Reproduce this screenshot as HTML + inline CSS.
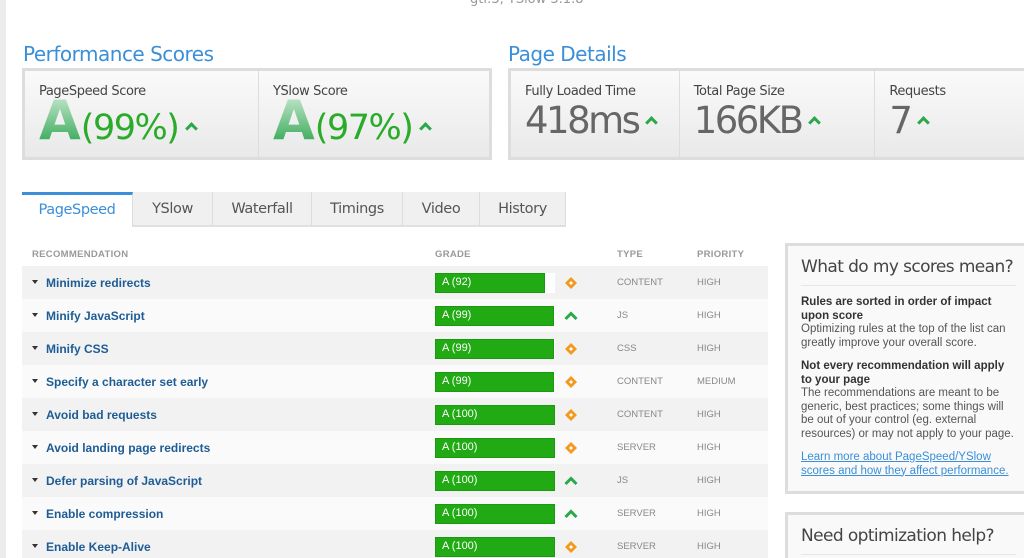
<!DOCTYPE html>
<html style="width:1024px;height:558px;overflow:hidden"><head><meta charset="utf-8"><style>
*{margin:0;padding:0;box-sizing:border-box}
body{width:1024px;height:558px;overflow:hidden;background:#fff;font-family:"DejaVu Sans","Liberation Sans",sans-serif;position:relative}
.abs{position:absolute}
.lstrip{left:0;top:0;width:6px;height:558px;background:#ececec}
h2{position:absolute;font-weight:normal;color:#3b8fd9;font-size:20px;letter-spacing:-0.5px}
.box{position:absolute;border:3px solid #ddd;background:linear-gradient(#fafafa,#e9e9e9);display:flex}
.cell{border-right:1px solid #ddd;padding:13px 0 0 14px;height:100%}
.lbl{font-size:13px;color:#444;letter-spacing:-0.4px}
.big{font-size:37px;color:#666;letter-spacing:-2.5px;line-height:40px;margin-top:2px}
.car{display:inline-block;width:9px;height:9px;border-left:3px solid #2aa84a;border-top:3px solid #2aa84a;transform:rotate(45deg);margin-left:9px;vertical-align:6px}
.A{font-size:54px;font-weight:bold;font-family:"DejaVu Sans",sans-serif;line-height:44px;background:linear-gradient(#d4eed9,#1f9f45);-webkit-background-clip:text;color:transparent}
.pct{font-size:35px;color:#2aab2a;letter-spacing:-1.5px}
.tabs{position:absolute;top:192px;left:22px;height:35px;display:flex}
.tab{background:#f0f0f0;border-right:1px solid #ddd;border-bottom:2px solid #e0e0e0;font-size:14.5px;color:#555;text-align:center;line-height:34px;letter-spacing:-0.4px}
.tab.act{background:#fff;color:#3b8fd9;border-top:3px solid #3b8fd9;border-bottom:none;line-height:30px}
.th{position:absolute;top:249px;font:bold 9.5px "Liberation Sans",sans-serif;color:#999;letter-spacing:.3px}
.row{position:absolute;left:22px;width:746px;height:33px;font-family:"Liberation Sans",sans-serif}
.row .n{position:absolute;left:24px;top:10px;font-size:12px;font-weight:bold;color:#1e5c96}
.row .n:before{content:"";position:absolute;left:-14px;top:4px;border:3.5px solid transparent;border-top:4px solid #333}
.bar{position:absolute;left:413px;top:7px;width:120px;height:20px;background:#fff}
.bar i{position:absolute;left:0;top:0;bottom:0;background:#22aa14;border:1px solid #1a9a10}
.bar span{position:absolute;left:7px;top:3px;color:#fff;font-size:11px}
.ic{position:absolute;left:542px;top:10px}
.ty,.pr{position:absolute;top:11px;font-size:9.5px;color:#888}
.ty{left:595px}.pr{left:675px}
.side{position:absolute;left:785px;width:250px;border:3px solid #ddd;background:#f9f9f9;font-family:"Liberation Sans",sans-serif;overflow:hidden}
.side h3{font:normal 17px "DejaVu Sans",sans-serif;color:#444;letter-spacing:-0.6px;white-space:nowrap;margin:0 16px 0 13px;padding:11px 0 8px;border-bottom:1px solid #e6e6e6}
.side p{font-size:11.5px;color:#555;margin:0 18px 0 13px;line-height:13.5px}
.side b{color:#333}
.side a{color:#3b8fd9;text-decoration:underline}
</style></head><body>
<div class="abs lstrip"></div>
<div class="abs" style="left:470px;top:-8px;font-size:13px;color:#999">gtl:3, YSlow 3.1.8</div>
<h2 style="left:23px;top:42px">Performance Scores</h2>
<h2 style="left:508px;top:42px">Page Details</h2>
<div class="box" style="left:22px;top:68px;width:470px;height:92px">
 <div class="cell" style="width:234px"><div class="lbl">PageSpeed Score</div><div style="white-space:nowrap"><span class="A">A</span><span class="pct">(99%)</span><span class="car"></span></div></div>
 <div class="cell" style="width:230px;border:none"><div class="lbl">YSlow Score</div><div style="white-space:nowrap"><span class="A">A</span><span class="pct">(97%)</span><span class="car"></span></div></div>
</div>
<div class="box" style="left:508px;top:68px;width:530px;height:92px">
 <div class="cell" style="width:169px"><div class="lbl">Fully Loaded Time</div><div class="big">418ms<span class="car"></span></div></div>
 <div class="cell" style="width:196px"><div class="lbl">Total Page Size</div><div class="big">166KB<span class="car"></span></div></div>
 <div class="cell" style="width:160px;border:none"><div class="lbl">Requests</div><div class="big">7<span class="car"></span></div></div>
</div>
<div class="tabs">
 <div class="tab act" style="width:111px">PageSpeed</div>
 <div class="tab" style="width:80px">YSlow</div>
 <div class="tab" style="width:99px">Waterfall</div>
 <div class="tab" style="width:91px">Timings</div>
 <div class="tab" style="width:77px">Video</div>
 <div class="tab" style="width:86px">History</div>
</div>
<div class="th" style="left:32px">RECOMMENDATION</div>
<div class="th" style="left:435px">GRADE</div>
<div class="th" style="left:617px">TYPE</div>
<div class="th" style="left:697px">PRIORITY</div>

<div class="row" style="top:266px;background:#f2f2f2"><span class="n">Minimize redirects</span><div class="bar"><i style="width:110px"></i><span>A (92)</span></div><svg class="ic" width="14" height="14"><path d="M7 1L13 7 7 13 1 7Z" fill="#f39a1e"/><path d="M7 5L9 7 7 9 5 7Z" fill="#fff"/></svg><span class="ty">CONTENT</span><span class="pr">HIGH</span></div>
<div class="row" style="top:299px;background:#fafafa"><span class="n">Minify JavaScript</span><div class="bar"><i style="width:119px"></i><span>A (99)</span></div><svg class="ic" width="14" height="14"><path d="M1.5 10L7 4.5 12.5 10" fill="none" stroke="#2aa84a" stroke-width="3"/></svg><span class="ty">JS</span><span class="pr">HIGH</span></div>
<div class="row" style="top:332px;background:#f2f2f2"><span class="n">Minify CSS</span><div class="bar"><i style="width:119px"></i><span>A (99)</span></div><svg class="ic" width="14" height="14"><path d="M7 1L13 7 7 13 1 7Z" fill="#f39a1e"/><path d="M7 5L9 7 7 9 5 7Z" fill="#fff"/></svg><span class="ty">CSS</span><span class="pr">HIGH</span></div>
<div class="row" style="top:365px;background:#fafafa"><span class="n">Specify a character set early</span><div class="bar"><i style="width:119px"></i><span>A (99)</span></div><svg class="ic" width="14" height="14"><path d="M7 1L13 7 7 13 1 7Z" fill="#f39a1e"/><path d="M7 5L9 7 7 9 5 7Z" fill="#fff"/></svg><span class="ty">CONTENT</span><span class="pr">MEDIUM</span></div>
<div class="row" style="top:398px;background:#f2f2f2"><span class="n">Avoid bad requests</span><div class="bar"><i style="width:120px"></i><span>A (100)</span></div><svg class="ic" width="14" height="14"><path d="M7 1L13 7 7 13 1 7Z" fill="#f39a1e"/><path d="M7 5L9 7 7 9 5 7Z" fill="#fff"/></svg><span class="ty">CONTENT</span><span class="pr">HIGH</span></div>
<div class="row" style="top:431px;background:#fafafa"><span class="n">Avoid landing page redirects</span><div class="bar"><i style="width:120px"></i><span>A (100)</span></div><svg class="ic" width="14" height="14"><path d="M7 1L13 7 7 13 1 7Z" fill="#f39a1e"/><path d="M7 5L9 7 7 9 5 7Z" fill="#fff"/></svg><span class="ty">SERVER</span><span class="pr">HIGH</span></div>
<div class="row" style="top:464px;background:#f2f2f2"><span class="n">Defer parsing of JavaScript</span><div class="bar"><i style="width:120px"></i><span>A (100)</span></div><svg class="ic" width="14" height="14"><path d="M1.5 10L7 4.5 12.5 10" fill="none" stroke="#2aa84a" stroke-width="3"/></svg><span class="ty">JS</span><span class="pr">HIGH</span></div>
<div class="row" style="top:497px;background:#fafafa"><span class="n">Enable compression</span><div class="bar"><i style="width:120px"></i><span>A (100)</span></div><svg class="ic" width="14" height="14"><path d="M1.5 10L7 4.5 12.5 10" fill="none" stroke="#2aa84a" stroke-width="3"/></svg><span class="ty">SERVER</span><span class="pr">HIGH</span></div>
<div class="row" style="top:530px;background:#f2f2f2"><span class="n">Enable Keep-Alive</span><div class="bar"><i style="width:120px"></i><span>A (100)</span></div><svg class="ic" width="14" height="14"><path d="M7 1L13 7 7 13 1 7Z" fill="#f39a1e"/><path d="M7 5L9 7 7 9 5 7Z" fill="#fff"/></svg><span class="ty">SERVER</span><span class="pr">HIGH</span></div>

<div class="side" style="top:243px;height:251px">
 <h3>What do my scores mean?</h3>
 <p style="margin-top:10px"><b>Rules are sorted in order of impact upon score</b><br>Optimizing rules at the top of the list can greatly improve your overall score.</p>
 <p style="margin-top:10px"><b>Not every recommendation will apply to your page</b><br>The recommendations are meant to be generic, best practices; some things will be out of your control (eg. external resources) or may not apply to your page.</p>
 <p style="margin-top:10px"><a>Learn more about PageSpeed/YSlow scores and how they affect performance.</a></p>
</div>
<div class="side" style="top:512px;height:60px">
 <h3>Need optimization help?</h3>
</div>
</body></html>
